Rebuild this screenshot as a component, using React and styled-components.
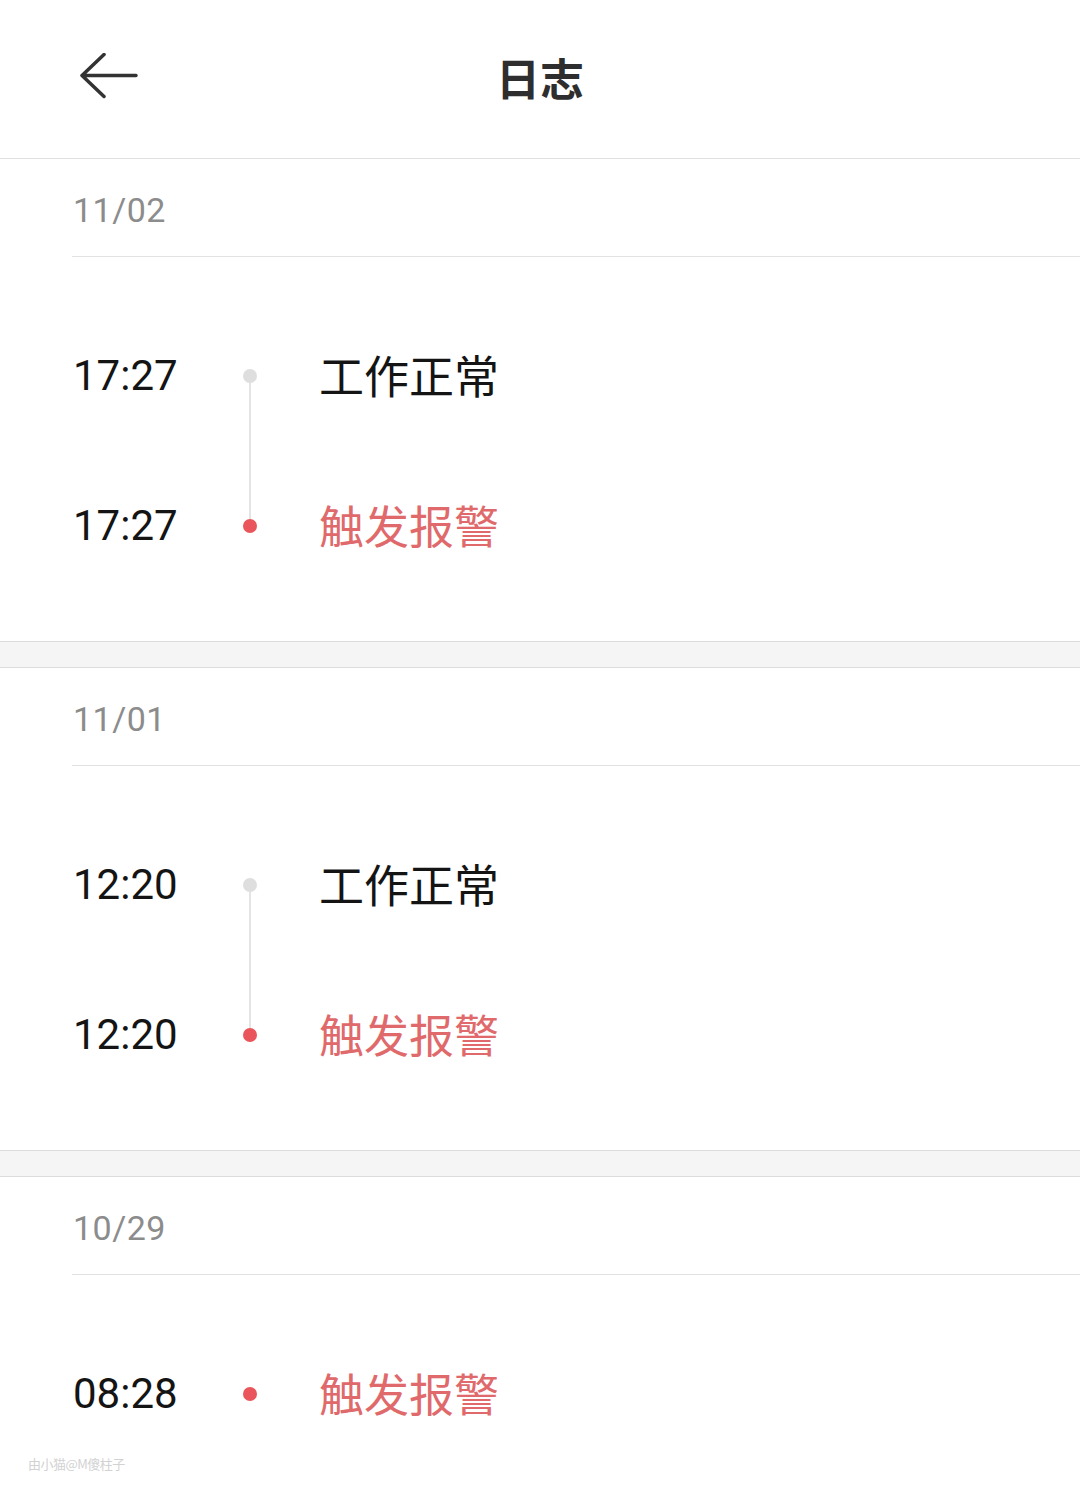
import React from "react";
import styled, { createGlobalStyle } from "styled-components";

const Global = createGlobalStyle`
  html, body { margin: 0; padding: 0; background: #ffffff; }
  body { font-family: Roboto, "Noto Sans CJK SC", sans-serif; }
  * { box-sizing: border-box; }
`;

const Page = styled.div`
  width: 1080px;
  min-height: 1501px;
  background: #fff;
  position: relative;
  overflow: hidden;
`;

const Header = styled.header`
  height: 159px;
  display: grid;
  grid-template-columns: 1fr auto 1fr;
  align-items: center;
  border-bottom: 1px solid #e0e0e0;
  padding-bottom: 4px;
`;

const BackButton = styled.button`
  justify-self: start;
  margin-left: 78px;
  width: 64px;
  height: 52px;
  padding: 0;
  border: none;
  background: transparent;
  display: flex;
  align-items: center;
  justify-content: flex-start;
  cursor: pointer;
`;

const Title = styled.h1`
  margin: 0;
  font-family: "Noto Sans CJK SC", sans-serif;
  font-size: 44px;
  font-weight: 700;
  color: #2e2e2e;
  letter-spacing: 0;
  line-height: 1;
`;

const Section = styled.section`
  background: #fff;
`;

const DateRow = styled.div`
  height: 98px;
  margin-left: 72px;
  padding-left: 1px;
  padding-top: 4px;
  display: flex;
  align-items: center;
  border-bottom: 1px solid #e2e2e2;
  font-family: Roboto, sans-serif;
  font-size: 34px;
  color: #8c8c8c;
  letter-spacing: 0.5px;
`;

const Entries = styled.div`
  padding: 44px 0 40px;
`;

const Row = styled.div`
  height: 150px;
  display: grid;
  grid-template-columns: 155px 44px 1fr;
  align-items: center;
  padding-left: 73px;
`;

const Time = styled.span`
  font-family: Roboto, sans-serif;
  font-size: 42px;
  color: #141414;
  line-height: 1;
`;

const DotCell = styled.div`
  height: 100%;
  display: flex;
  flex-direction: column;
  align-items: center;
`;

const Segment = styled.div`
  flex: 1;
  width: 2px;
  background: ${(p) => (p.$visible ? "#e4e4e4" : "transparent")};
`;

const Dot = styled.div`
  width: 14px;
  height: 14px;
  border-radius: 50%;
  flex: none;
  background: ${(p) => (p.$alarm ? "#e9555a" : "#dedede")};
`;

const Status = styled.span`
  padding-left: 47px;
  padding-bottom: 4px;
  font-family: "Noto Sans CJK SC", sans-serif;
  font-size: 45px;
  line-height: 1;
  color: ${(p) => (p.$alarm ? "#e0696b" : "#141414")};
`;

const Gap = styled.div`
  height: 27px;
  background: #f5f5f5;
  border-top: 1px solid #dcdcdc;
  border-bottom: 1px solid #dcdcdc;
`;

const Watermark = styled.span`
  position: absolute;
  left: 28px;
  top: 1454px;
  font-family: "Noto Sans CJK SC", sans-serif;
  font-size: 13px;
  color: #d2d2d2;
  letter-spacing: -0.5px;
`;

const BackArrow = () => (
  <svg width="60" height="48" viewBox="0 0 60 48" fill="none">
    <path
      d="M58 22.5H4M26 1.5L4 22.5L26 43.5"
      stroke="#333"
      strokeWidth="3.5"
      strokeLinecap="round"
      strokeLinejoin="round"
    />
  </svg>
);

const data = [
  {
    date: "11/02",
    items: [
      { time: "17:27", text: "工作正常", alarm: false },
      { time: "17:27", text: "触发报警", alarm: true },
    ],
  },
  {
    date: "11/01",
    items: [
      { time: "12:20", text: "工作正常", alarm: false },
      { time: "12:20", text: "触发报警", alarm: true },
    ],
  },
  {
    date: "10/29",
    items: [{ time: "08:28", text: "触发报警", alarm: true }],
  },
];

export default function App() {
  return (
    <Page>
      <Global />
      <Header>
        <BackButton aria-label="返回">
          <BackArrow />
        </BackButton>
        <Title>日志</Title>
        <div />
      </Header>
      {data.map((sec, si) => (
        <React.Fragment key={sec.date}>
          {si > 0 && <Gap />}
          <Section>
            <DateRow>{sec.date}</DateRow>
            <Entries>
              {sec.items.map((it, i) => (
                <Row key={i}>
                  <Time>{it.time}</Time>
                  <DotCell>
                    <Segment $visible={i > 0} />
                    <Dot $alarm={it.alarm} />
                    <Segment $visible={i < sec.items.length - 1} />
                  </DotCell>
                  <Status $alarm={it.alarm}>{it.text}</Status>
                </Row>
              ))}
            </Entries>
          </Section>
        </React.Fragment>
      ))}
      <Watermark>由小猫@M傻柱子</Watermark>
    </Page>
  );
}
